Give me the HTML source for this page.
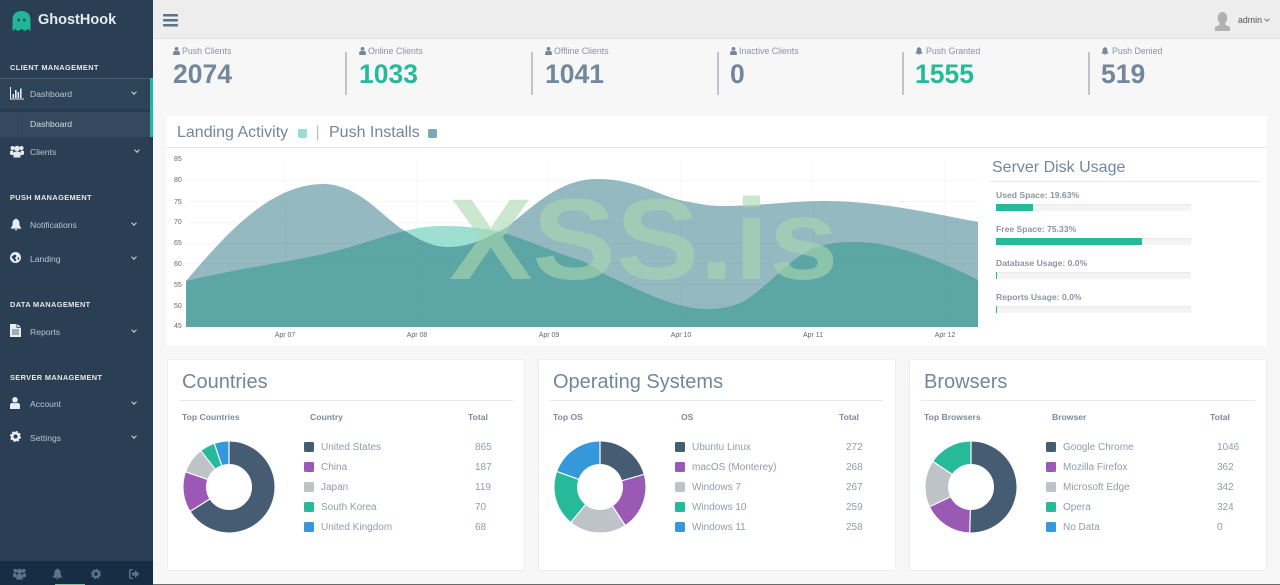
<!DOCTYPE html>
<html>
<head>
<meta charset="utf-8">
<title>GhostHook</title>
<style>
html,body{margin:0;padding:0;width:1280px;height:585px;overflow:hidden;background:#F7F7F7;font-family:"Liberation Sans",sans-serif;color:#73879C}
div,span,svg{position:absolute}
.t{white-space:nowrap;line-height:20px;height:20px}
.sec{left:10px;font-size:7.4px;font-weight:bold;letter-spacing:.37px;color:#E7E7E7}
.m{left:30px;font-size:8.6px;color:#BAC6D2}
.chev{width:3px;height:3px;border-right:1.5px solid #D0D7DD;border-bottom:1.5px solid #D0D7DD;transform:rotate(45deg)}
.sl{font-size:8.8px;color:#8794A5}
.sn{font-size:26.5px;font-weight:bold;color:#73879C;line-height:30px;height:30px;white-space:nowrap}
.g{color:#26B99A}
.dv{width:2px;top:52px;height:43px;background:#BFC4C8}
.card{top:359px;height:212px;background:#fff;border:1px solid #EDEFF1;box-sizing:border-box;border-radius:2px}
.h2{font-size:20px;color:#73879C;top:372px}
.ul{top:400px;height:1px;background:#E6E9ED}
.th{font-size:8.6px;font-weight:bold;color:#7F8B9B;top:407px}
.li{font-size:10px;color:#8F9CAD}
.sq{width:10px;height:10px;border-radius:1.5px}
.bl{left:996px;font-size:8.6px;font-weight:bold;color:#8A95A3}
.bar{left:996px;width:195px;height:7px;background:#F4F4F4;box-shadow:inset 0 1px 1px #E8E8E8}
.bf{left:0;top:0;height:7px;background:#26B99A}
.yl{left:174px;font-size:7px;color:#666}
.xl{font-size:7px;color:#666;top:326px;width:40px;text-align:center}
</style>
</head>
<body>
<!-- sidebar -->
<div style="left:0;top:0;width:153px;height:585px;background:#2A3F54"></div>
<svg style="left:12px;top:10px" width="19" height="22" viewBox="0 0 19 22"><path d="M0.5 10C0.5 4 4 1 9.500 1S18.500 4 18.500 10V21L16 19L13 21L9.500 19L6 21L3 19L0.500 21Z" fill="#1FB798"/><rect x="5.500" y="8.500" width="2.500" height="3" rx="1" fill="#24514f"/><rect x="11" y="8.500" width="2.500" height="3" rx="1" fill="#24514f"/></svg>
<div class="t" style="left:38px;top:10px;font-size:14.5px;font-weight:bold;color:#E6EBEF">GhostHook</div>

<div class="t sec" style="top:58px">CLIENT MANAGEMENT</div>
<div style="left:0;top:78px;width:150px;height:1px;background:#4A5D70"></div>
<div style="left:0;top:79px;width:150px;height:33px;background:#2D4358"></div>
<div style="left:0;top:109px;width:150px;height:3px;background:#283C50"></div>
<div style="left:0;top:112px;width:150px;height:25px;background:#34495E"></div>
<div style="left:150px;top:78px;width:3px;height:59px;background:#1ABB9C"></div>
<div style="left:17px;top:114px;width:2px;height:21px;background:#31465B"></div>

<svg style="left:10px;top:87px" width="14" height="13" viewBox="0 0 14 13" fill="#E4E9ED"><path d="M0 0H1V11.500H14V12.500H0Z"/><rect x="2.500" y="7" width="1.600" height="4"/><rect x="5" y="3" width="1.600" height="8"/><rect x="7.500" y="5" width="1.600" height="6"/><rect x="10" y="1.500" width="1.600" height="9.500"/></svg>
<div class="t m" style="top:84px">Dashboard</div><div class="chev" style="left:132px;top:90px"></div>
<div class="t m" style="top:114px;color:#D6DDE3">Dashboard</div>

<svg style="left:10px;top:145px" width="14" height="13" viewBox="0 0 14 13" fill="#E4E9ED"><circle cx="2.500" cy="3" r="2"/><circle cx="11.500" cy="3" r="2"/><circle cx="7" cy="3.500" r="2.800"/><path d="M0 9V6.500C0 5.800 1 5.500 3 5.500L3.500 7V10H1Z"/><path d="M14 9V6.500C14 5.800 13 5.500 11 5.500L10.500 7V10H13Z"/><path d="M3.500 12.500V8.500C3.500 7 5 6.500 7 6.500S10.500 7 10.500 8.500V12.500Z"/></svg>
<div class="t m" style="top:142px">Clients</div><div class="chev" style="left:135px;top:148px"></div>

<div class="t sec" style="top:188px">PUSH MANAGEMENT</div>
<svg style="left:10px;top:218px" width="12" height="13" viewBox="0 0 16 16" fill="#E8ECEF"><path d="M8 0C8.600 0 9 .4 9 1C11.500 1.500 12.500 3.500 12.500 6C12.500 9.500 13.500 11 15 12.500V13.500H1V12.500C2.500 11 3.500 9.500 3.500 6C3.500 3.500 4.500 1.500 7 1C7 .4 7.400 0 8 0ZM6.200 14.300H9.800C9.800 15.300 9 16 8 16S6.200 15.300 6.200 14.300Z"/></svg>
<div class="t m" style="top:215px">Notifications</div><div class="chev" style="left:132px;top:221px"></div>

<svg style="left:10px;top:252px" width="11" height="11" viewBox="0 0 11 11"><circle cx="5.500" cy="5.500" r="5.500" fill="#E8ECEF"/><path d="M3 3.500L5.500 2.500L6.500 4L5 6L6.500 8.500L5 9.500L3 7L1.500 5Z" fill="#2A3F54"/><path d="M8 5L9.500 6L8.500 8L7.500 7Z" fill="#2A3F54"/></svg>
<div class="t m" style="top:249px">Landing</div><div class="chev" style="left:132px;top:255px"></div>

<div class="t sec" style="top:295px">DATA MANAGEMENT</div>
<svg style="left:10px;top:324px" width="11" height="13" viewBox="0 0 11 13"><path d="M0 0H6.500V4H11V13H0Z" fill="#E8ECEF"/><path d="M7.300 0L11 3.300H7.300Z" fill="#E8ECEF"/><path d="M2 6H9M2 8H9M2 10H9" stroke="#2A3F54" stroke-width=".8"/></svg>
<div class="t m" style="top:322px">Reports</div><div class="chev" style="left:132px;top:328px"></div>

<div class="t sec" style="top:368px">SERVER MANAGEMENT</div>
<svg style="left:10px;top:397px" width="10" height="12" viewBox="0 0 10 12" fill="#E8ECEF"><circle cx="5" cy="2.800" r="2.800"/><path d="M0 12V8.500C0 6.500 1.500 6 3 5.800C4 6.500 6 6.500 7 5.800C8.500 6 10 6.500 10 8.500V12Z"/></svg>
<div class="t m" style="top:394px">Account</div><div class="chev" style="left:132px;top:400px"></div>

<svg style="left:10px;top:431px" width="11" height="11" viewBox="0 0 11 11"><circle cx="5.500" cy="5.500" r="3.300" fill="none" stroke="#E8ECEF" stroke-width="2.600"/><circle cx="5.500" cy="5.500" r="4.700" fill="none" stroke="#E8ECEF" stroke-width="1.600" stroke-dasharray="2.100 1.590"/></svg>
<div class="t m" style="top:428px">Settings</div><div class="chev" style="left:132px;top:434px"></div>

<!-- sidebar footer -->
<div style="left:0;top:561px;width:153px;height:24px;background:#172D44"></div>
<svg style="left:13px;top:568px" width="13" height="12" viewBox="0 0 14 13" fill="#5A738E"><circle cx="2.500" cy="3" r="2"/><circle cx="11.500" cy="3" r="2"/><circle cx="7" cy="3.500" r="2.800"/><path d="M0 9V6.500C0 5.800 1 5.500 3 5.500L3.500 7V10H1Z"/><path d="M14 9V6.500C14 5.800 13 5.500 11 5.500L10.500 7V10H13Z"/><path d="M3.500 12.500V8.500C3.500 7 5 6.500 7 6.500S10.500 7 10.500 8.500V12.500Z"/></svg>
<svg style="left:52px;top:568px" width="11" height="12" viewBox="0 0 16 16" fill="#5A738E"><path d="M8 0C8.600 0 9 .4 9 1C11.500 1.500 12.500 3.500 12.500 6C12.500 9.500 13.500 11 15 12.500V13.500H1V12.500C2.500 11 3.500 9.500 3.500 6C3.500 3.500 4.500 1.500 7 1C7 .4 7.400 0 8 0ZM6.200 14.300H9.800C9.800 15.300 9 16 8 16S6.200 15.300 6.200 14.300Z"/></svg>
<svg style="left:91px;top:569px" width="10" height="10" viewBox="0 0 11 11"><circle cx="5.500" cy="5.500" r="3.300" fill="none" stroke="#5A738E" stroke-width="2.600"/><circle cx="5.500" cy="5.500" r="4.700" fill="none" stroke="#5A738E" stroke-width="1.600" stroke-dasharray="2.100 1.590"/></svg>
<svg style="left:129px;top:569px" width="11" height="10" viewBox="0 0 11 10" fill="#5A738E"><path d="M0 1.500C0 .7 .7 0 1.500 0H4V1.300H1.500V8.700H4V10H1.500C.7 10 0 9.300 0 8.500Z"/><path d="M3 3.500H6V1L10.500 5L6 9V6.500H3Z"/></svg>
<div style="left:55px;top:584px;width:30px;height:1px;background:#7FBF9A"></div>

<!-- top bar -->
<div style="left:153px;top:0;width:1127px;height:38px;background:#EDEDED;border-bottom:1px solid #E0E2E4"></div>
<svg style="left:163px;top:14px" width="16" height="13" viewBox="0 0 16 13" fill="#5A738E"><rect x="0" y="0" width="15" height="2.500" rx=".8"/><rect x="0" y="5" width="15" height="2.500" rx=".8"/><rect x="0" y="10" width="15" height="2.500" rx=".8"/></svg>
<svg style="left:1214px;top:12px" width="17" height="19" viewBox="0 0 17 19" fill="#B1B1B1"><ellipse cx="8.500" cy="6" rx="4.800" ry="6"/><path d="M5.500 10.500H11.500V13L16 15V19H1V15L5.500 13Z"/></svg>
<div class="t" style="left:1238px;top:10px;font-size:8.800px;color:#515356">admin</div>
<svg style="left:1264px;top:18px" width="6" height="4" viewBox="0 0 6 4"><path d="M.5 .7L3 3.200L5.500 .7" fill="none" stroke="#666" stroke-width=".8"/></svg>

<!-- stats -->
<svg style="left:173px;top:47px" width="7" height="8" viewBox="0 0 10 12" fill="#73879C"><circle cx="5" cy="2.800" r="2.800"/><path d="M0 12V8.500C0 6.500 1.500 6 3 5.800C4 6.500 6 6.500 7 5.800C8.500 6 10 6.500 10 8.500V12Z"/></svg>
<div class="t sl" style="left:182px;top:41px">Push Clients</div>
<div class="sn" style="left:173px;top:59px">2074</div>
<div class="dv" style="left:345px"></div>

<svg style="left:359px;top:47px" width="7" height="8" viewBox="0 0 10 12" fill="#73879C"><circle cx="5" cy="2.800" r="2.800"/><path d="M0 12V8.500C0 6.500 1.500 6 3 5.800C4 6.500 6 6.500 7 5.800C8.500 6 10 6.500 10 8.500V12Z"/></svg>
<div class="t sl" style="left:368px;top:41px">Online Clients</div>
<div class="sn g" style="left:359px;top:59px">1033</div>
<div class="dv" style="left:531px"></div>

<svg style="left:545px;top:47px" width="7" height="8" viewBox="0 0 10 12" fill="#73879C"><circle cx="5" cy="2.800" r="2.800"/><path d="M0 12V8.500C0 6.500 1.500 6 3 5.800C4 6.500 6 6.500 7 5.800C8.500 6 10 6.500 10 8.500V12Z"/></svg>
<div class="t sl" style="left:554px;top:41px">Offline Clients</div>
<div class="sn" style="left:545px;top:59px">1041</div>
<div class="dv" style="left:717px"></div>

<svg style="left:730px;top:47px" width="7" height="8" viewBox="0 0 10 12" fill="#73879C"><circle cx="5" cy="2.800" r="2.800"/><path d="M0 12V8.500C0 6.500 1.500 6 3 5.800C4 6.500 6 6.500 7 5.800C8.500 6 10 6.500 10 8.500V12Z"/></svg>
<div class="t sl" style="left:739px;top:41px">Inactive Clients</div>
<div class="sn" style="left:730px;top:59px">0</div>
<div class="dv" style="left:902px"></div>

<svg style="left:915px;top:47px" width="8" height="8" viewBox="0 0 16 16" fill="#73879C"><path d="M8 0C8.600 0 9 .4 9 1C11.500 1.500 12.500 3.500 12.500 6C12.500 9.500 13.500 11 15 12.500V13.500H1V12.500C2.500 11 3.500 9.500 3.500 6C3.500 3.500 4.500 1.500 7 1C7 .4 7.400 0 8 0ZM6.200 14.300H9.800C9.800 15.300 9 16 8 16S6.200 15.300 6.200 14.300Z"/></svg>
<div class="t sl" style="left:926px;top:41px">Push Granted</div>
<div class="sn g" style="left:915px;top:59px">1555</div>
<div class="dv" style="left:1088px"></div>

<svg style="left:1101px;top:47px" width="8" height="8" viewBox="0 0 16 16" fill="#73879C"><path d="M8 0C8.600 0 9 .4 9 1C11.500 1.500 12.500 3.500 12.500 6C12.500 9.500 13.500 11 15 12.500V13.500H1V12.500C2.500 11 3.500 9.500 3.500 6C3.500 3.500 4.500 1.500 7 1C7 .4 7.400 0 8 0ZM6.200 14.300H9.800C9.800 15.300 9 16 8 16S6.200 15.300 6.200 14.300Z"/></svg>
<div class="t sl" style="left:1112px;top:41px">Push Denied</div>
<div class="sn" style="left:1101px;top:59px">519</div>

<!-- chart panel -->
<div style="left:167px;top:116px;width:1100px;height:230px;background:#fff"></div>
<div style="left:167px;top:147px;width:1100px;height:1px;background:#E6E9ED"></div>
<div class="t" style="left:177px;top:123px;font-size:16px;color:#73879C">Landing Activity</div>
<div class="sq" style="left:298px;top:129px;width:9px;height:9px;background:#9CDDD1"></div>
<div class="t" style="left:315.500px;top:123px;font-size:16px;color:#B8C1CA">|</div>
<div class="t" style="left:329px;top:123px;font-size:16px;color:#73879C">Push Installs</div>
<div class="sq" style="left:428px;top:129px;width:9px;height:9px;background:#7FA8B2"></div>

<div class="t yl" style="top:150px">85</div>
<div class="t yl" style="top:171px">80</div>
<div class="t yl" style="top:192.500px">75</div>
<div class="t yl" style="top:213px">70</div>
<div class="t yl" style="top:234px">65</div>
<div class="t yl" style="top:254.500px">60</div>
<div class="t yl" style="top:275.500px">55</div>
<div class="t yl" style="top:296.500px">50</div>
<div class="t yl" style="top:317px">45</div>
<div class="t xl" style="left:265px">Apr 07</div>
<div class="t xl" style="left:397px">Apr 08</div>
<div class="t xl" style="left:529px">Apr 09</div>
<div class="t xl" style="left:661px">Apr 10</div>
<div class="t xl" style="left:793px">Apr 11</div>
<div class="t xl" style="left:925px">Apr 12</div>

<svg style="left:0;top:0" width="1280" height="585" viewBox="0 0 1280 585">
<g stroke="#F7F7F7" stroke-width="1" fill="none">
<path d="M186 180.500H978M186 201.500H978M186 222.500H978M186 243.500H978M186 263.500H978M186 284.500H978M186 305.500H978"/>
<path d="M285 160V327M417 160V327M549 160V327M681 160V327M813 160V327M945 160V327"/>
</g>
<path d="M186 281C240 268 290 262 327 253C355 247 385 235 405 231C420 227 430 226 443 226C465 226 480 228 497 231C530 240 560 255 580 260C595 266 600 273 613 278C650 296 680 309 707 309C725 309 740 305 752 296C775 278 790 260 810 250C825 243 840 242 857 242C890 242 935 258 978 280V327H186Z" fill="rgba(38,185,154,.45)"/>
<path d="M186 281C225 235 270 184 323 184C360 184 385 220 405 231C420 240 432 247 448 247C470 247 487 238 507 227C535 205 560 179 597 179C640 179 660 198 690 202C705 205 712 206 723 206C760 206 790 201 823 201C880 201 930 213 978 222V327H186Z" fill="rgba(3,88,106,.42)"/>
<text transform="translate(449 279) scale(.955 .88)" x="0" y="0" font-family="Liberation Sans" font-weight="bold" font-size="131" fill="rgb(170,215,175)" fill-opacity=".6">XSS.is</text>
</svg>

<!-- server disk usage -->
<div class="t" style="left:992px;top:158px;font-size:16px;color:#73879C">Server Disk Usage</div>
<div style="left:990px;top:181px;width:270px;height:1px;background:#E6E9ED"></div>
<div class="t bl" style="top:185px">Used Space: 19.63%</div>
<div class="bar" style="top:204px"><div class="bf" style="width:37px"></div></div>
<div class="t bl" style="top:219px">Free Space: 75.33%</div>
<div class="bar" style="top:238px"><div class="bf" style="width:146px"></div></div>
<div class="t bl" style="top:253px">Database Usage: 0.0%</div>
<div class="bar" style="top:272px"><div class="bf" style="width:1px"></div></div>
<div class="t bl" style="top:287px">Reports Usage: 0.0%</div>
<div class="bar" style="top:306px"><div class="bf" style="width:1px"></div></div>

<!-- Countries -->
<div class="card" style="left:167px;width:358px"></div>
<div class="t h2" style="left:182px">Countries</div>
<div class="ul" style="left:179px;width:334px"></div>
<div class="t th" style="left:182px">Top Countries</div>
<div class="t th" style="left:310px">Country</div>
<div class="t th" style="left:468px">Total</div>
<svg style="left:183px;top:441px" width="92" height="92" viewBox="-46 -46 92 92">
<g transform="rotate(-90)" fill="none" stroke-width="22.500">
<circle r="34.250" pathLength="360" stroke="#455C73" stroke-dasharray="237.900 360" stroke-dashoffset="0"/>
<circle r="34.250" pathLength="360" stroke="#9B59B6" stroke-dasharray="51.400 360" stroke-dashoffset="-237.900"/>
<circle r="34.250" pathLength="360" stroke="#BDC3C7" stroke-dasharray="32.800 360" stroke-dashoffset="-289.300"/>
<circle r="34.250" pathLength="360" stroke="#26B99A" stroke-dasharray="19.200 360" stroke-dashoffset="-322.100"/>
<circle r="34.250" pathLength="360" stroke="#3498DB" stroke-dasharray="18.700 360" stroke-dashoffset="-341.300"/>
</g>
<g stroke="#fff" stroke-width="1.200">
<line y1="-22" y2="-46"/><line y1="-22" y2="-46" transform="rotate(237.900)"/><line y1="-22" y2="-46" transform="rotate(289.300)"/><line y1="-22" y2="-46" transform="rotate(322.100)"/><line y1="-22" y2="-46" transform="rotate(341.300)"/>
</g></svg>
<div class="sq" style="left:304px;top:442px;background:#455C73"></div><div class="t li" style="left:321px;top:438px">United States</div><div class="t li" style="left:475px;top:438px">865</div>
<div class="sq" style="left:304px;top:462px;background:#9B59B6"></div><div class="t li" style="left:321px;top:458px">China</div><div class="t li" style="left:475px;top:458px">187</div>
<div class="sq" style="left:304px;top:482px;background:#BDC3C7"></div><div class="t li" style="left:321px;top:478px">Japan</div><div class="t li" style="left:475px;top:478px">119</div>
<div class="sq" style="left:304px;top:502px;background:#26B99A"></div><div class="t li" style="left:321px;top:498px">South Korea</div><div class="t li" style="left:475px;top:498px">70</div>
<div class="sq" style="left:304px;top:522px;background:#3498DB"></div><div class="t li" style="left:321px;top:518px">United Kingdom</div><div class="t li" style="left:475px;top:518px">68</div>

<!-- OS -->
<div class="card" style="left:538px;width:358px"></div>
<div class="t h2" style="left:553px">Operating Systems</div>
<div class="ul" style="left:550px;width:333px"></div>
<div class="t th" style="left:553px">Top OS</div>
<div class="t th" style="left:681px">OS</div>
<div class="t th" style="left:839px">Total</div>
<svg style="left:554px;top:441px" width="92" height="92" viewBox="-46 -46 92 92">
<g transform="rotate(-90)" fill="none" stroke-width="22.500">
<circle r="34.250" pathLength="360" stroke="#455C73" stroke-dasharray="73.960 360" stroke-dashoffset="0"/>
<circle r="34.250" pathLength="360" stroke="#9B59B6" stroke-dasharray="72.840 360" stroke-dashoffset="-73.960"/>
<circle r="34.250" pathLength="360" stroke="#BDC3C7" stroke-dasharray="72.600 360" stroke-dashoffset="-146.800"/>
<circle r="34.250" pathLength="360" stroke="#26B99A" stroke-dasharray="70.400 360" stroke-dashoffset="-219.400"/>
<circle r="34.250" pathLength="360" stroke="#3498DB" stroke-dasharray="70.200 360" stroke-dashoffset="-289.800"/>
</g>
<g stroke="#fff" stroke-width="1.200">
<line y1="-22" y2="-46"/><line y1="-22" y2="-46" transform="rotate(73.960)"/><line y1="-22" y2="-46" transform="rotate(146.800)"/><line y1="-22" y2="-46" transform="rotate(219.400)"/><line y1="-22" y2="-46" transform="rotate(289.800)"/>
</g></svg>
<div class="sq" style="left:675px;top:442px;background:#455C73"></div><div class="t li" style="left:692px;top:438px">Ubuntu Linux</div><div class="t li" style="left:846px;top:438px">272</div>
<div class="sq" style="left:675px;top:462px;background:#9B59B6"></div><div class="t li" style="left:692px;top:458px">macOS (Monterey)</div><div class="t li" style="left:846px;top:458px">268</div>
<div class="sq" style="left:675px;top:482px;background:#BDC3C7"></div><div class="t li" style="left:692px;top:478px">Windows 7</div><div class="t li" style="left:846px;top:478px">267</div>
<div class="sq" style="left:675px;top:502px;background:#26B99A"></div><div class="t li" style="left:692px;top:498px">Windows 10</div><div class="t li" style="left:846px;top:498px">259</div>
<div class="sq" style="left:675px;top:522px;background:#3498DB"></div><div class="t li" style="left:692px;top:518px">Windows 11</div><div class="t li" style="left:846px;top:518px">258</div>

<!-- Browsers -->
<div class="card" style="left:909px;width:358px"></div>
<div class="t h2" style="left:924px">Browsers</div>
<div class="ul" style="left:921px;width:334px"></div>
<div class="t th" style="left:924px">Top Browsers</div>
<div class="t th" style="left:1052px">Browser</div>
<div class="t th" style="left:1210px">Total</div>
<svg style="left:925px;top:441px" width="92" height="92" viewBox="-46 -46 92 92">
<g transform="rotate(-90)" fill="none" stroke-width="22.500">
<circle r="34.250" pathLength="360" stroke="#455C73" stroke-dasharray="181.600 360" stroke-dashoffset="0"/>
<circle r="34.250" pathLength="360" stroke="#9B59B6" stroke-dasharray="62.800 360" stroke-dashoffset="-181.600"/>
<circle r="34.250" pathLength="360" stroke="#BDC3C7" stroke-dasharray="59.400 360" stroke-dashoffset="-244.400"/>
<circle r="34.250" pathLength="360" stroke="#26B99A" stroke-dasharray="56.200 360" stroke-dashoffset="-303.800"/>
</g>
<g stroke="#fff" stroke-width="1.200">
<line y1="-22" y2="-46"/><line y1="-22" y2="-46" transform="rotate(181.600)"/><line y1="-22" y2="-46" transform="rotate(244.400)"/><line y1="-22" y2="-46" transform="rotate(303.800)"/>
</g></svg>
<div class="sq" style="left:1046px;top:442px;background:#455C73"></div><div class="t li" style="left:1063px;top:438px">Google Chrome</div><div class="t li" style="left:1217px;top:438px">1046</div>
<div class="sq" style="left:1046px;top:462px;background:#9B59B6"></div><div class="t li" style="left:1063px;top:458px">Mozilla Firefox</div><div class="t li" style="left:1217px;top:458px">362</div>
<div class="sq" style="left:1046px;top:482px;background:#BDC3C7"></div><div class="t li" style="left:1063px;top:478px">Microsoft Edge</div><div class="t li" style="left:1217px;top:478px">342</div>
<div class="sq" style="left:1046px;top:502px;background:#26B99A"></div><div class="t li" style="left:1063px;top:498px">Opera</div><div class="t li" style="left:1217px;top:498px">324</div>
<div class="sq" style="left:1046px;top:522px;background:#3498DB"></div><div class="t li" style="left:1063px;top:518px">No Data</div><div class="t li" style="left:1217px;top:518px">0</div>

<div style="left:153px;top:584px;width:1127px;height:1px;background:#6A6A6A"></div>
</body>
</html>
